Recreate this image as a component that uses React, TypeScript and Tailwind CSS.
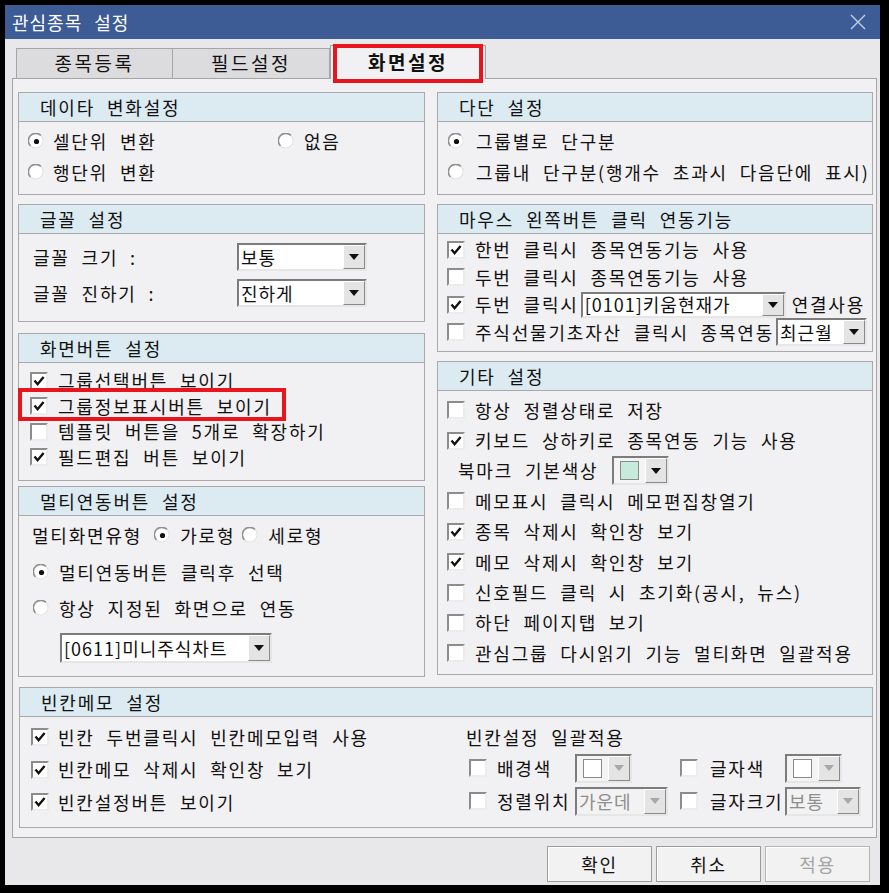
import type { ReactNode } from "react";

function Check({ on = false }: { on?: boolean }) {
  return (
    <span className="inline-flex h-[18px] w-[18px] shrink-0 items-center justify-center border-2 border-t-[#8c8c8c] border-l-[#8c8c8c] border-r-[#ececec] border-b-[#ececec] bg-white">
      {on && (
        <svg width="12" height="12" viewBox="0 0 12 12">
          <path d="M1.5 5.5 L4.6 9.2 L10.6 2" fill="none" stroke="#111" strokeWidth="2.4" />
        </svg>
      )}
    </span>
  );
}

function Radio({ on = false }: { on?: boolean }) {
  return (
    <svg width="17" height="17" viewBox="0 0 17 17" className="shrink-0">
      <circle cx="8.5" cy="8.5" r="7.5" fill="#fff" />
      <path d="M2.5 13 A7 7 0 0 1 13 2.5" fill="none" stroke="#8f8f8f" strokeWidth="1.6" />
      <path d="M13 2.5 A7 7 0 0 1 2.5 13" fill="none" stroke="#e2e2e2" strokeWidth="1.2" />
      {on && <circle cx="8.5" cy="8.5" r="2.6" fill="#111" />}
    </svg>
  );
}

function Arrow({ dim = false }: { dim?: boolean }) {
  return (
    <span className="flex h-full w-[22px] shrink-0 items-center justify-center border border-t-white border-l-white border-r-[#8a8a8a] border-b-[#8a8a8a] bg-[#e4e4e4]">
      <svg width="10" height="6" viewBox="0 0 10 6">
        <path d="M0 0 H10 L5 6 Z" fill={dim ? "#a8a8a8" : "#111"} />
      </svg>
    </span>
  );
}

function Combo({ size, text, dim = false }: { size: string; text: string; dim?: boolean }) {
  return (
    <div
      className={`flex shrink-0 border-2 border-t-[#7c7c7c] border-l-[#7c7c7c] border-r-[#e6e6e6] border-b-[#e6e6e6] ${
        dim ? "bg-[#f2f2f2] text-[#8e8e8e]" : "bg-white"
      } ${size}`}
    >
      <span className="flex min-w-0 flex-1 items-center whitespace-nowrap pl-[2px] tracking-[1px]">{text}</span>
      <Arrow dim={dim} />
    </div>
  );
}

function ColorPick({ fill, dim = false }: { fill: string; dim?: boolean }) {
  return (
    <div className="flex h-[29px] w-[57px] shrink-0 border-2 border-t-[#7c7c7c] border-l-[#7c7c7c] border-r-[#e6e6e6] border-b-[#e6e6e6] bg-[#f4f4f4]">
      <span className="flex flex-1 items-center justify-center">
        <span className="h-[19px] w-[19px] border border-[#8a8a8a]" style={{ background: fill }} />
      </span>
      <Arrow dim={dim} />
    </div>
  );
}

function Section({ title, className, children }: { title: string; className: string; children?: ReactNode }) {
  return (
    <div className={`flex shrink-0 flex-col border border-[#a9a9ab] ${className}`}>
      <div className="flex h-[29px] shrink-0 items-center border-b border-[#a9a9ab] bg-[#dcebf1] pl-[21px]">
        {title}
      </div>
      {children}
    </div>
  );
}

function RedMark({ className }: { className: string }) {
  return <span className={`pointer-events-none absolute z-20 border-4 border-[#e8151d] ${className}`} />;
}

const topRows: [boolean, string][] = [
  [false, "항상 정렬상태로 저장"],
  [true, "키보드 상하키로 종목연동 기능 사용"],
];

const otherRows: [boolean, string][] = [
  [false, "메모표시 클릭시 메모편집창열기"],
  [true, "종목 삭제시 확인창 보기"],
  [true, "메모 삭제시 확인창 보기"],
  [false, "신호필드 클릭 시 초기화(공시, 뉴스)"],
  [false, "하단 페이지탭 보기"],
  [false, "관심그룹 다시읽기 기능 멀티화면 일괄적용"],
];

export default function App() {
  return (
    <div className="h-[893px] w-[889px] bg-black pt-[5px] pl-[5px] pr-[9px] pb-[8px] font-['Noto_Sans_CJK_KR','Noto_Sans',sans-serif] text-[18px] tracking-[1.8px] text-[#111] [word-spacing:6px]">
      <div className="flex h-full flex-col bg-[#e8e7e9]">
        {/* title bar */}
        <div className="flex h-[34px] shrink-0 items-center justify-between bg-[#3d5b95] pl-[7px] pr-[14px] text-[18px] tracking-[1px] text-white [word-spacing:7px]">
          <span>관심종목 설정</span>
          <svg width="16" height="16" viewBox="0 0 16 16">
            <path d="M1 1 L15 15 M15 1 L1 15" stroke="#c3d0ea" strokeWidth="1.4" />
          </svg>
        </div>

        <div className="flex flex-1 flex-col pl-[7px] pr-[3px]">
          {/* tabs */}
          <div className="flex h-[39px] shrink-0 items-end pl-[4px] text-[19px] tracking-[2.5px]">
            <div className="flex h-[30px] w-[157px] items-center justify-center border border-b-0 border-[#a5a5a5] bg-[#dcdcde]">
              종목등록
            </div>
            <div className="flex h-[30px] w-[157px] items-center justify-center border border-b-0 border-l-0 border-[#a5a5a5] bg-[#dcdcde]">
              필드설정
            </div>
            <div className="relative z-10 -mb-px flex h-[34px] w-[156px] items-center justify-center border border-b-0 border-[#a5a5a5] bg-[#f1f0f2] font-bold">
              화면설정
              <RedMark className="left-[2px] -top-[2px] h-[39px] w-[150px]" />
            </div>
          </div>

          {/* tab page */}
          <div className="flex h-[760px] shrink-0 flex-col border border-[#a5a5a5] bg-[#f1f0f2] pt-[13px] pl-[5px] pr-[3px]">
            <div className="flex gap-[12px]">
              {/* left column */}
              <div className="flex w-[407px] flex-col">
                <Section title="데이타 변화설정" className="h-[103px]">
                  <div className="flex flex-col pt-[4px] pl-[9px]">
                    <div className="flex h-[31px] items-center">
                      <div className="flex w-[250px] items-center gap-[8px]">
                        <Radio on />
                        셀단위 변환
                      </div>
                      <div className="flex items-center gap-[9px]">
                        <Radio />
                        없음
                      </div>
                    </div>
                    <div className="flex h-[31px] items-center gap-[8px]">
                      <Radio />
                      행단위 변환
                    </div>
                  </div>
                </Section>

                <Section title="글꼴 설정" className="mt-[9px] h-[118px]">
                  <div className="flex flex-col pt-[5px] pl-[14px]">
                    <div className="flex h-[36px] items-center">
                      <span className="w-[204px]">글꼴 크기 :</span>
                      <Combo size="h-[28px] w-[130px]" text="보통" />
                    </div>
                    <div className="flex h-[36px] items-center">
                      <span className="w-[204px]">글꼴 진하기 :</span>
                      <Combo size="h-[28px] w-[130px]" text="진하게" />
                    </div>
                  </div>
                </Section>

                <Section title="화면버튼 설정" className="mt-[11px] h-[148px]">
                  <div className="flex flex-col pt-[5px] pl-[11px]">
                    <div className="flex h-[25.5px] items-center gap-[10px]">
                      <Check on />
                      그룹선택버튼 보이기
                    </div>
                    <div className="relative flex h-[25.5px] items-center gap-[10px]">
                      <Check on />
                      그룹정보표시버튼 보이기
                      <RedMark className="-left-[12px] -top-[6px] h-[33px] w-[268px]" />
                    </div>
                    <div className="flex h-[25.5px] items-center gap-[10px]">
                      <Check />
                      템플릿 버튼을 5개로 확장하기
                    </div>
                    <div className="flex h-[25.5px] items-center gap-[10px]">
                      <Check on />
                      필드편집 버튼 보이기
                    </div>
                  </div>
                </Section>

                <Section title="멀티연동버튼 설정" className="mt-[5px] h-[191px]">
                  <div className="flex flex-col pl-[13px]">
                    <div className="flex h-[38px] items-center whitespace-nowrap">
                      멀티화면유형
                      <span className="ml-[12px]">
                        <Radio on />
                      </span>
                      <span className="ml-[9px]">가로형</span>
                      <span className="ml-[7px]">
                        <Radio />
                      </span>
                      <span className="ml-[9px]">세로형</span>
                    </div>
                    <div className="flex h-[36px] items-center gap-[9px] pl-[1px]">
                      <Radio on />
                      멀티연동버튼 클릭후 선택
                    </div>
                    <div className="flex h-[36px] items-center gap-[9px] pl-[1px]">
                      <Radio />
                      항상 지정된 화면으로 연동
                    </div>
                    <div className="mt-[7px] ml-[28px]">
                      <Combo size="h-[30px] w-[212px]" text="[0611]미니주식차트" />
                    </div>
                  </div>
                </Section>
              </div>

              {/* right column */}
              <div className="flex w-[436px] flex-col">
                <Section title="다단 설정" className="h-[103px]">
                  <div className="flex flex-col pt-[4px] pl-[10px]">
                    <div className="flex h-[31px] items-center gap-[11px]">
                      <Radio on />
                      그룹별로 단구분
                    </div>
                    <div className="flex h-[31px] items-center gap-[11px] whitespace-nowrap">
                      <Radio />
                      그룹내 단구분(행개수 초과시 다음단에 표시)
                    </div>
                  </div>
                </Section>

                <Section title="마우스 왼쪽버튼 클릭 연동기능" className="mt-[9px] h-[148px]">
                  <div className="flex flex-col pt-[2px] pl-[9px] whitespace-nowrap">
                    <div className="flex h-[27.5px] items-center gap-[10px]">
                      <Check on />
                      한번 클릭시 종목연동기능 사용
                    </div>
                    <div className="flex h-[27.5px] items-center gap-[10px]">
                      <Check />
                      두번 클릭시 종목연동기능 사용
                    </div>
                    <div className="flex h-[27.5px] items-center">
                      <Check on />
                      <span className="ml-[10px]">두번 클릭시</span>
                      <span className="ml-[2px]">
                        <Combo size="h-[26px] w-[205px]" text="[0101]키움현재가" />
                      </span>
                      <span className="ml-[6px]">연결사용</span>
                    </div>
                    <div className="flex h-[27.5px] items-center">
                      <Check />
                      <span className="ml-[10px]">주식선물기초자산 클릭시 종목연동</span>
                      <span className="ml-[2px]">
                        <Combo size="h-[28px] w-[91px]" text="최근월" />
                      </span>
                    </div>
                  </div>
                </Section>

                <Section title="기타 설정" className="mt-[9px] h-[314px]">
                  <div className="flex flex-col pt-[4px] pl-[9px] whitespace-nowrap">
                    {topRows.map(([on, label]) => (
                      <div key={label} className="flex h-[30.4px] items-center gap-[10px]">
                        <Check on={on} />
                        {label}
                      </div>
                    ))}
                    <div className="flex h-[30.4px] items-center pl-[11px]">
                      북마크 기본색상
                      <span className="ml-[14px]">
                        <ColorPick fill="#c6eadb" />
                      </span>
                    </div>
                    {otherRows.map(([on, label]) => (
                      <div key={label} className="flex h-[30.4px] items-center gap-[10px]">
                        <Check on={on} />
                        {label}
                      </div>
                    ))}
                  </div>
                </Section>
              </div>
            </div>

            {/* blank-cell memo options */}
            <Section title="빈칸메모 설정" className="mt-[10px] ml-[1px] h-[141px] w-[854px]">
              <div className="flex whitespace-nowrap">
                <div className="flex w-[446px] flex-col pt-[4px] pl-[11px]">
                  <div className="flex h-[32.5px] items-center gap-[9px]">
                    <Check on />
                    빈칸 두번클릭시 빈칸메모입력 사용
                  </div>
                  <div className="flex h-[32.5px] items-center gap-[9px]">
                    <Check on />
                    빈칸메모 삭제시 확인창 보기
                  </div>
                  <div className="flex h-[32.5px] items-center gap-[9px]">
                    <Check on />
                    빈칸설정버튼 보이기
                  </div>
                </div>
                <div className="flex flex-col pt-[4px]">
                  <div className="flex h-[32px] items-center">빈칸설정 일괄적용</div>
                  <div className="grid h-[30px] grid-cols-[109px_105px_105px_auto] items-center">
                    <div className="flex items-center gap-[10px] pl-[3px]">
                      <Check />
                      배경색
                    </div>
                    <ColorPick fill="#ffffff" dim />
                    <div className="flex items-center gap-[12px]">
                      <Check />
                      글자색
                    </div>
                    <ColorPick fill="#ffffff" dim />
                  </div>
                  <div className="grid h-[36px] grid-cols-[109px_105px_105px_auto] items-center">
                    <div className="flex items-center gap-[10px] pl-[3px]">
                      <Check />
                      정렬위치
                    </div>
                    <Combo size="h-[29px] w-[93px]" text="가운데" dim />
                    <div className="flex items-center gap-[12px]">
                      <Check />
                      글자크기
                    </div>
                    <Combo size="h-[29px] w-[76px]" text="보통" dim />
                  </div>
                </div>
              </div>
            </Section>
          </div>

          {/* dialog buttons */}
          <div className="flex justify-end gap-[4px] pt-[8px] pr-[7px]">
            <button className="flex h-[36px] w-[105px] items-center justify-center border border-[#9c9c9c] bg-[#f2f2f2] shadow-[inset_1px_1px_0_#ffffff]">
              확인
            </button>
            <button className="flex h-[36px] w-[105px] items-center justify-center border border-[#9c9c9c] bg-[#f2f2f2] shadow-[inset_1px_1px_0_#ffffff]">
              취소
            </button>
            <button className="flex h-[36px] w-[105px] items-center justify-center border border-[#b4b4b4] bg-[#f2f2f2] text-[#a3a3a3] shadow-[inset_1px_1px_0_#ffffff]">
              적용
            </button>
          </div>
        </div>
      </div>
    </div>
  );
}
